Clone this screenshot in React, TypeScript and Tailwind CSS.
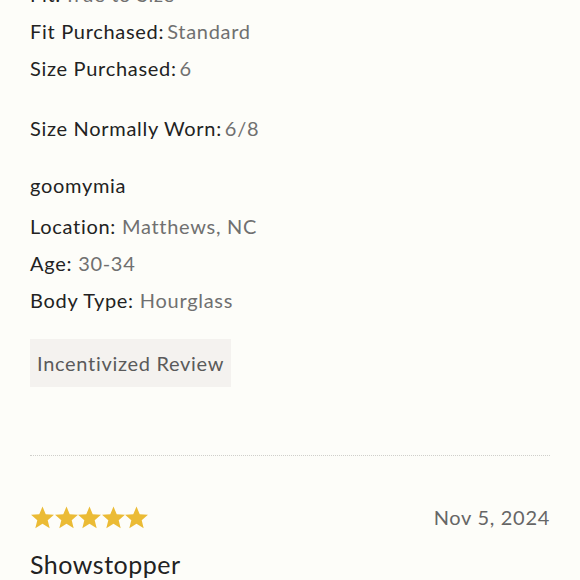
import React from "react";

const fitRows = [
  { label: "Fit:", value: "True to Size" },
  { label: "Fit Purchased:", value: "Standard" },
  { label: "Size Purchased:", value: "6" },
];

const reviewer = [
  { label: "Location:", value: "Matthews, NC" },
  { label: "Age:", value: "30-34" },
  { label: "Body Type:", value: "Hourglass" },
];

function Star() {
  return (
    <svg viewBox="0 0 24 24" className="w-[25px] h-[25px] -mr-[1.5px]" fill="#ebbb35">
      <path d="M12 1.5l3.1 7.3 7.9.6-6 5.2 1.9 7.7L12 18.1l-6.9 4.2 1.9-7.7-6-5.2 7.9-.6z" />
    </svg>
  );
}

function Row({ label, value, tight }: { label: string; value: string; tight?: boolean }) {
  return (
    <div className="h-[37px] leading-[37px] text-[20px] tracking-[0.7px] whitespace-nowrap">
      <span className="text-[#222]">{label}</span>
      <span className={`text-[#707070] ${tight ? "ml-[3px]" : "ml-[6px]"}`}>{value}</span>
    </div>
  );
}

export default function App() {
  return (
    <div
      className="w-full h-[580px] overflow-hidden bg-[#fdfdf9]"
      style={{ fontFamily: "Lato, 'Noto Sans', sans-serif" }}
    >
      <div className="px-[30px] -mt-[24px]">
        {/* fit details */}
        {fitRows.map((r) => (
          <Row key={r.label} label={r.label} value={r.value} tight />
        ))}
        <div className="mt-[23px]">
          <Row label="Size Normally Worn:" value="6/8" tight />
        </div>

        {/* reviewer */}
        <div className="mt-[20px] h-[37px] leading-[37px] text-[20px] tracking-[0.7px] text-[#222]">
          goomymia
        </div>
        <div className="mt-[4px]">
          {reviewer.map((r) => (
            <Row key={r.label} label={r.label} value={r.value} />
          ))}
        </div>

        <div className="mt-[20px] inline-flex items-center h-[48px] px-[7px] bg-[#f4f2ef] text-[20px] tracking-[0.7px] text-[#5a5a5a]">
          Incentivized Review
        </div>

        <div className="mt-[68px] border-t border-dotted border-[#cfcfcb]" />

        {/* next review */}
        <div className="mt-[46px] flex items-center justify-between h-[30px]">
          <div className="flex">
            <Star />
            <Star />
            <Star />
            <Star />
            <Star />
          </div>
          <span className="text-[20px] tracking-[0.7px] text-[#666]">Nov 5, 2024</span>
        </div>
        <div className="mt-[12px] text-[25px] leading-[40px] tracking-[0.5px] text-[#222]">Showstopper</div>
      </div>
    </div>
  );
}
